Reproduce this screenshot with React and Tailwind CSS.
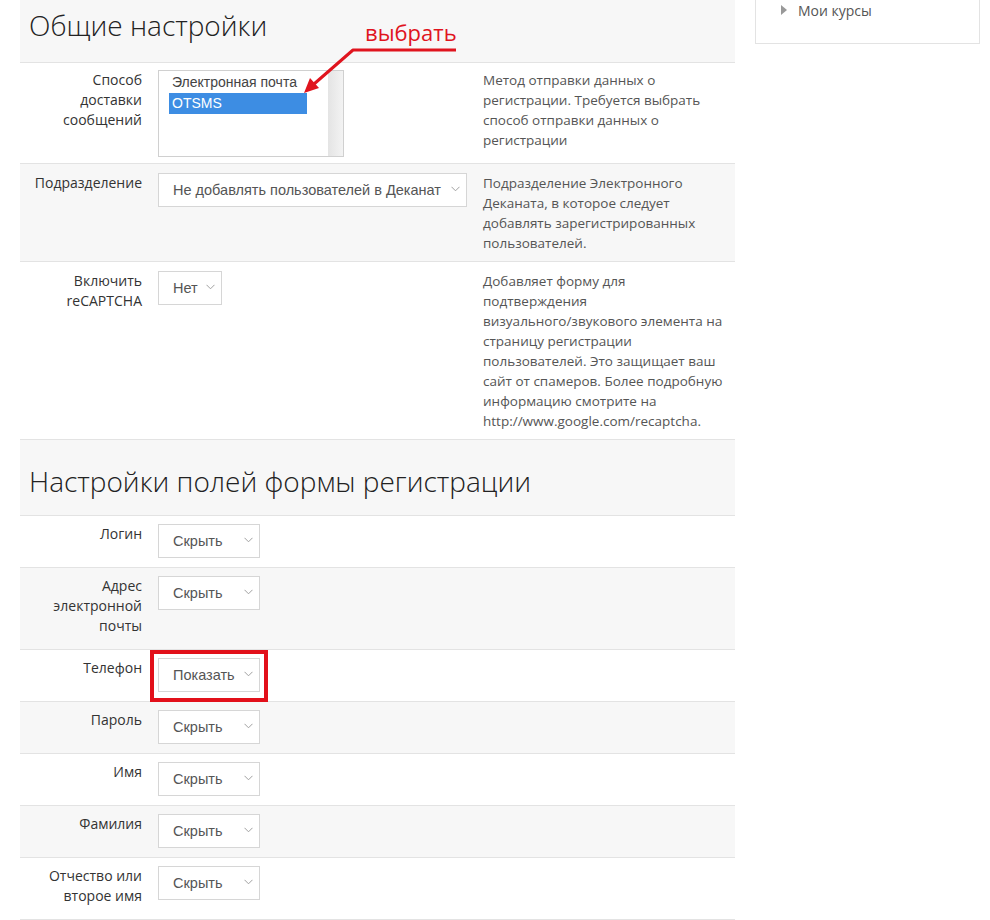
import React from "react";

const fieldRows = [
  { label: "Логин", value: "Скрыть" },
  { label: "Адрес электронной почты", value: "Скрыть" },
  { label: "Телефон", value: "Показать", marked: true },
  { label: "Пароль", value: "Скрыть" },
  { label: "Имя", value: "Скрыть" },
  { label: "Фамилия", value: "Скрыть" },
  { label: "Отчество или второе имя", value: "Скрыть" },
];

function Chevron() {
  return (
    <svg width="9" height="6" viewBox="0 0 9 6" className="shrink-0 -mt-[2px]">
      <path d="M0.5 0.8 L4.5 4.8 L8.5 0.8" fill="none" stroke="#a0a0a0" strokeWidth="1" />
    </svg>
  );
}

function Select({ value, width }) {
  return (
    <div
      className={`${width} h-[34px] flex items-center justify-between pl-[14px] pr-[6px] border border-[#d6d6d6] bg-white text-[14.5px] text-[#555] font-['Liberation_Sans',Arial,sans-serif]`}
    >
      <span className="pt-[2px]">{value}</span>
      <Chevron />
    </div>
  );
}

function Help({ lines }) {
  return (
    <div className="flex-1 text-[13.5px] leading-5 text-[#555]">
      {lines.map((line) => (
        <div key={line} className="whitespace-nowrap">{line}</div>
      ))}
    </div>
  );
}

function Row({ label, gray, compact, help, children }) {
  return (
    <div
      className={`flex border-b border-[#e3e3e3] ${gray ? "bg-[#f7f7f7]" : "bg-white"} ${
        compact ? "pt-2 pb-[9px]" : "pt-[9px] pb-2"
      }`}
    >
      <div className="w-[138px] shrink-0 pl-[10px] pr-4 pb-1 text-right text-[14px] leading-5 text-[#333]">
        {label}
      </div>
      <div className="w-[325px] shrink-0">{children}</div>
      {help && <Help lines={help} />}
    </div>
  );
}

function Heading({ children, top }) {
  return (
    <div className={`bg-[#f7f7f7] border-b border-[#e3e3e3] pl-[9px] ${top}`}>
      <h2 className="text-[28px] leading-[34px] font-light text-[#222]">{children}</h2>
    </div>
  );
}

export default function App() {
  return (
    <div className="relative min-h-[920px] bg-white font-['Open_Sans',sans-serif]">
      <div className="flex gap-5 pl-5 pr-[10px]">
        <main className="w-[715px] shrink-0">
          <Heading top="pt-2 pb-5">Общие настройки</Heading>

          <div className="flex border-b border-[#e3e3e3] bg-white pt-[7px] pb-[6px]">
            <div className="w-[138px] shrink-0 pl-[10px] pr-4 text-right text-[14px] leading-5 text-[#333]">
              Способ доставки сообщений
            </div>
            <div className="w-[325px] shrink-0">
              <div className="w-[186px] h-[87px] flex border border-[#d0d0d0] bg-white">
                <div className="flex-1 pt-[1px] pl-[10px] text-[14px] font-['Liberation_Sans',Arial,sans-serif]">
                  <div className="w-[138px] h-[21px] leading-[21px] pl-[3px] text-[#444]">Электронная почта</div>
                  <div className="w-[138px] h-[21px] leading-[21px] pl-[3px] bg-[#3d8de3] text-white">OTSMS</div>
                </div>
                <div className="w-[15px] bg-gradient-to-r from-[#e4e4e4] to-[#f3f3f3]"></div>
              </div>
            </div>
            <Help
              lines={[
                "Метод отправки данных о",
                "регистрации. Требуется выбрать",
                "способ отправки данных о",
                "регистрации",
              ]}
            />
          </div>

          <Row
            gray
            label="Подразделение"
            help={[
              "Подразделение Электронного",
              "Деканата, в которое следует",
              "добавлять зарегистрированных",
              "пользователей.",
            ]}
          >
            <Select width="w-[309px]" value="Не добавлять пользователей в Деканат" />
          </Row>

          <Row
            label="Включить reCAPTCHA"
            help={[
              "Добавляет форму для",
              "подтверждения",
              "визуального/звукового элемента на",
              "страницу регистрации",
              "пользователей. Это защищает ваш",
              "сайт от спамеров. Более подробную",
              "информацию смотрите на",
              "http://www.google.com/recaptcha.",
            ]}
          >
            <Select width="w-[64px]" value="Нет" />
          </Row>

          <Heading top="pt-6 pb-[17px]">Настройки полей формы регистрации</Heading>

          {fieldRows.map((row, i) => (
            <Row key={row.label} label={row.label} gray={i % 2 === 1} compact>
              {row.marked ? (
                <div className="relative w-[102px]">
                  <Select width="w-[102px]" value={row.value} />
                  <div className="absolute -top-2 -left-2 -right-2 -bottom-[10px] border-[4px] border-[#e2101a]"></div>
                </div>
              ) : (
                <Select width="w-[102px]" value={row.value} />
              )}
            </Row>
          ))}
        </main>

        <aside className="w-[225px] shrink-0">
          <div className="h-[44px] border border-t-0 border-[#e3e3e3] pl-[25px] flex items-start">
            <div className="flex items-center gap-[11px] h-5 text-[14px] text-[#555]">
              <svg width="6" height="10" viewBox="0 0 6 10">
                <path d="M0 0 L6 5 L0 10 Z" fill="#999" />
              </svg>
              <span>Мои курсы</span>
            </div>
          </div>
        </aside>
      </div>

      {/* annotation */}
      <div className="absolute left-[365px] top-[17px] text-[22px] leading-[30px] text-[#e0141e]">выбрать</div>
      <svg className="absolute left-0 top-0 pointer-events-none" width="500" height="110" viewBox="0 0 500 110">
        <path d="M456 50 L353 50 L314 84" fill="none" stroke="#e0141e" strokeWidth="3" strokeLinejoin="round" />
        <polygon points="304,93 319,88 310,78" fill="#e0141e" />
      </svg>
    </div>
  );
}
